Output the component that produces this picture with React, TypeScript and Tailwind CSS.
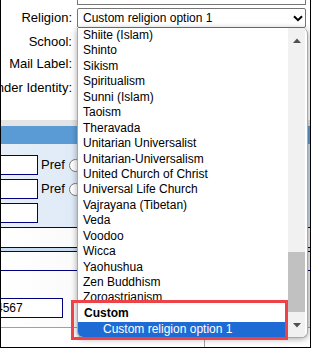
import React from "react";

const options = [
  "Shiite (Islam)",
  "Shinto",
  "Sikism",
  "Spiritualism",
  "Sunni (Islam)",
  "Taoism",
  "Theravada",
  "Unitarian Universalist",
  "Unitarian-Universalism",
  "United Church of Christ",
  "Universal Life Church",
  "Vajrayana (Tibetan)",
  "Veda",
  "Voodoo",
  "Wicca",
  "Yaohushua",
  "Zen Buddhism",
  "Zoroastrianism",
];

const Chevron = () => (
  <svg width="10" height="7" viewBox="0 0 10 7">
    <path d="M1 1.2l4 4 4-4" fill="none" stroke="#000" strokeWidth="2" />
  </svg>
);

const Label = ({ text }: { text: string }) => (
  <div className="w-[71px] flex justify-end whitespace-nowrap text-[13px] leading-[20px]">{text}</div>
);

const App = () => {
  return (
    <div className="w-[312px] h-[349px] bg-white font-['Liberation_Sans',Arial,sans-serif] text-black">
      <div className="relative w-[311px] h-[348px] overflow-hidden border-l border-r border-b border-black bg-white">
        {/* field above */}
        <div className="ml-[76px] w-[229px] h-[5px] border-x border-b border-[#767676]" />

        <div className="mt-[3px] flex h-[20px]">
          <Label text="Religion:" />
          <div className="ml-[5px] w-[229px] h-[20px] border border-[#767676] rounded-[2px] flex items-center pl-[5px] pr-[2px] text-[12px]">
            <span className="flex-1">Custom religion option 1</span>
            <Chevron />
          </div>
        </div>
        <div className="mt-[4px] flex h-[20px]">
          <Label text="School:" />
        </div>
        <div className="mt-[2px] flex h-[20px]">
          <Label text="Mail Label:" />
        </div>
        <div className="mt-[4px] flex h-[20px]">
          <Label text="Gender Identity:" />
        </div>

        {/* section header */}
        <div className="mt-[22px] h-[6px] bg-[#e4e4e4]" />
        <div className="h-[18px] bg-[#5b9bd5]" />

        {/* phone panel */}
        <div className="h-[84px] pt-[11px] border-b border-[#000080] bg-gradient-to-r from-[#e6eff9] to-[#c9dcf0] flex flex-col gap-[4px]">
          {[true, true, false].map((pref, i) => (
            <div key={i} className="flex items-center h-[20px]">
              <div className="w-[37px] h-[20px] bg-white border border-l-0 border-[#000080]" />
              {pref && (
                <>
                  <span className="ml-[3px] text-[13px]">Pref</span>
                  <span className="ml-[4px] w-[13px] h-[13px] rounded-full border border-[#767676] bg-white" />
                </>
              )}
            </div>
          ))}
        </div>
        <div className="h-[20px] border-b border-[#000080] bg-gradient-to-r from-white to-[#ececec]" />
        <div className="h-[4px] border-b border-[#000080] bg-[#c9dcf0]" />
        <div className="h-[19px] border-b border-[#000080] bg-gradient-to-r from-white to-[#ececec]" />
        <div className="h-[57px] pt-[27px] border-b border-[#a0a0a0] bg-gradient-to-r from-white to-[#ececec]">
          <div className="w-[62px] h-[20px] bg-white border border-l-0 border-[#000080] overflow-hidden flex items-center">
            <span className="ml-[-5px] text-[12px] whitespace-nowrap">4567</span>
          </div>
        </div>
        <div className="h-[19px] flex">
          <div className="ml-[203px] w-px h-full bg-[#a0a0a0]" />
        </div>

        {/* open dropdown */}
        <div className="absolute left-[76px] top-[28px] w-[231px] h-[310px] bg-white border border-t-0 border-[#a8a8a8] rounded-b-[6px] rounded-tr-[6px] overflow-hidden shadow-[0_1px_6px_rgba(0,0,0,0.35)] flex">
          <div className="w-[210px] flex flex-col text-[12px]">
            <div className="h-[274px] overflow-hidden pl-[5px]">
              {options.map((o) => (
                <div key={o} className="h-[15.44px] leading-[15.44px] whitespace-nowrap">
                  {o}
                </div>
              ))}
            </div>
            <div className="h-[20px] flex items-end pb-[1.5px] pl-[6px] font-bold leading-[15px] bg-white">Custom</div>
            <div className="h-[15px] leading-[15px] pl-[25px] bg-[#1e6bd6] text-white whitespace-nowrap">
              Custom religion option 1
            </div>
          </div>
          <div className="w-[17px] bg-[#f1f1f1] flex flex-col pt-[4px] pb-[3px]">
            <div className="h-[17px] flex items-center justify-center">
              <svg width="8" height="5" viewBox="0 0 8 5">
                <path d="M0 5L4 0.5L8 5Z" fill="#505050" />
              </svg>
            </div>
            <div className="flex-1" />
            <div className="h-[60px] bg-[#c1c1c1]" />
            <div className="h-[5px]" />
            <div className="h-[17px] flex items-center justify-center">
              <svg width="8" height="5" viewBox="0 0 8 5">
                <path d="M0 0L4 4.5L8 0Z" fill="#505050" />
              </svg>
            </div>
          </div>
        </div>

        {/* highlight */}
        <div className="absolute left-[70px] top-[300px] w-[217px] h-[40px] border-[3px] border-[#ee4249]" />
      </div>
    </div>
  );
};

export default App;
